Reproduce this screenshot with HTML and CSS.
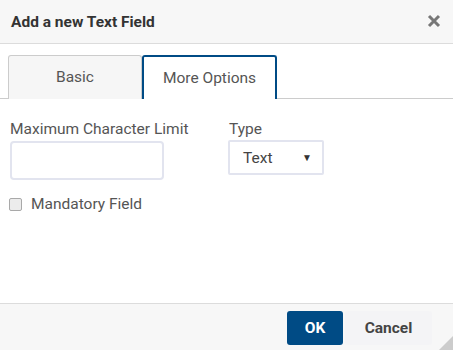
FILE: index.html
```html
<!DOCTYPE html>
<html lang="en">
<head>
    <meta charset="UTF-8">
    <title>Add a new Text Field</title>
    <link rel="stylesheet" href="styles.css">
</head>
<body>
    <div class="dialogo">
        <div class="cabecera">
            <span class="titulo">Add a new Text Field</span>
            <span class="cerrar">
                <svg width="14" height="14" viewBox="0 0 14 14"><path d="M2 2 L12 12 M12 2 L2 12" stroke="#777" stroke-width="3"/></svg>
            </span>
        </div>

        <div class="pestanas">
            <div class="pestana">Basic</div>
            <div class="pestana activa">More Options</div>
        </div>

        <div class="contenido">
            <div class="fila">
                <div class="campo limite">
                    <label>Maximum Character Limit</label>
                    <input type="text" class="caja">
                </div>
                <div class="campo">
                    <label>Type</label>
                    <div class="selector"><span>Text</span><span class="flecha">&#9660;</span></div>
                </div>
            </div>
            <div class="marcar">
                <span class="casilla"></span>
                <span>Mandatory Field</span>
            </div>
        </div>

        <div class="pie">
            <button class="boton ok">OK</button>
            <button class="boton cancelar">Cancel</button>
            <span class="esquina"></span>
        </div>
    </div>
</body>
</html>
```

FILE: styles.css
```css
body {
    margin: 0;
    font-family: Roboto, "Liberation Sans", sans-serif;
    background-color: #ffffff;
}

.dialogo {
    width: 453px;
    height: 350px;
    display: flex;
    flex-direction: column;
    position: relative;
}

.cabecera {
    height: 43px;
    background-color: #f7f7f7;
    border-bottom: 1px solid #dcdcdc;
    display: flex;
    align-items: center;
    justify-content: space-between;
    padding: 0 12px 0 11px;
}

.titulo {
    font-size: 15.5px;
    font-weight: bold;
    color: #333;
}

.cerrar {
    display: flex;
    margin-top: -1px;
}

.pestanas {
    display: flex;
    padding: 11px 0 0 8px;
    border-bottom: 1px solid #cccccc;
    height: 43px;
}

.pestana {
    width: 132px;
    margin-bottom: -1px;
    font-size: 15.5px;
    color: #555;
    display: flex;
    align-items: center;
    justify-content: center;
    background-color: #f6f6f6;
    border: 1px solid #cccccc;
    border-bottom: none;
    border-radius: 3px 3px 0 0;
    padding-bottom: 1px;
}

.pestana.activa {
    width: 131px;
    background-color: #ffffff;
    border: 2px solid #004b85;
    border-bottom: none;
    border-bottom-left-radius: 0;
}

.contenido {
    flex: 1;
    padding: 21px 10px 0 9px;
}

.fila {
    display: flex;
}

.campo {
    display: flex;
    flex-direction: column;
}

.limite {
    width: 219px;
}

.campo label {
    font-size: 15.5px;
    color: #555;
    margin-bottom: 3px;
    padding-left: 1px;
}

.caja {
    width: 154px;
    height: 39px;
    box-sizing: border-box;
    border: 2px solid #e2e4ef;
    border-radius: 4px;
    margin: 0 0 0 1px;
    outline: none;
}

.selector {
    width: 96px;
    height: 35px;
    box-sizing: border-box;
    border: 2px solid #e2e4ef;
    border-radius: 2px;
    display: flex;
    align-items: center;
    justify-content: space-between;
    padding: 0 10px 0 13px;
    font-size: 15.5px;
    color: #444;
    margin-top: -1px;
}

.flecha {
    font-size: 10px;
    color: #333;
}

.marcar {
    display: flex;
    align-items: center;
    gap: 9px;
    margin-top: 15px;
    font-size: 15.5px;
    color: #555;
}

.casilla {
    width: 11px;
    height: 11px;
    border: 1px solid #a9a9a9;
    border-radius: 2px;
    background-color: #ececec;
}

.pie {
    height: 46px;
    background-color: #f7f7f7;
    border-top: 1px solid #dcdcdc;
    display: flex;
    align-items: center;
    justify-content: flex-end;
    padding-right: 21px;
    gap: 2px;
}

.boton {
    font-family: Roboto, "Liberation Sans", sans-serif;
    font-size: 15.5px;
    font-weight: bold;
    border: none;
    border-radius: 3px;
    height: 34px;
    margin-top: 2px;
}

.ok {
    width: 56px;
    background-color: #004b85;
    color: #ffffff;
}

.cancelar {
    width: 87px;
    background-color: #f4f4f6;
    color: #444;
}

.esquina {
    position: absolute;
    right: 0;
    bottom: 0;
    width: 0;
    height: 0;
    border-left: 14px solid transparent;
    border-bottom: 14px solid #cccccc;
}
```
